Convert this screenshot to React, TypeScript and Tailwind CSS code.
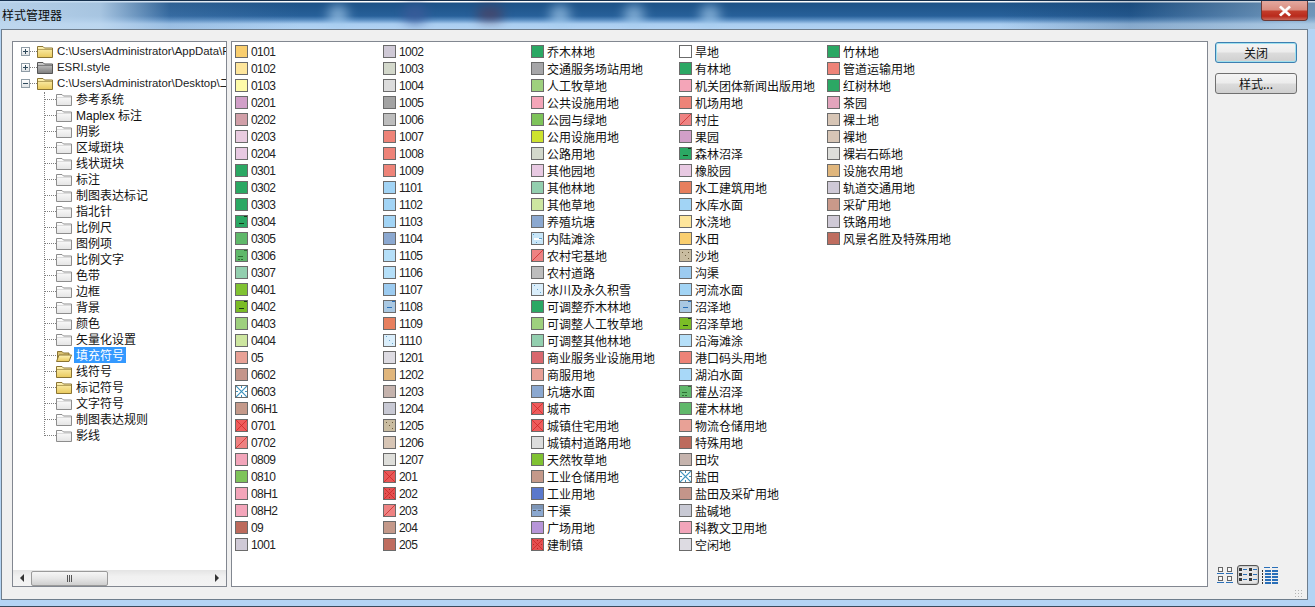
import React from "react";

type Item = [string, string, string?];

const col1: Item[] = [
  ["0101", "#f9ce6f"], ["0102", "#fee69c"], ["0103", "#fefba9"], ["0201", "#d19fc8"], ["0202", "#d19fa8"],
  ["0203", "#e9cbe0"], ["0204", "#e8c9e2"], ["0301", "#2ba864"], ["0302", "#2ba864"], ["0303", "#2ba864"],
  ["0304", "#2ba864", "dash"], ["0305", "#5fb86a"], ["0306", "#5fb86a", "dash2"], ["0307", "#93cfaf"], ["0401", "#80c232"],
  ["0402", "#7bbc26", "dash"], ["0403", "#9ed07e"], ["0404", "#cde6a0"], ["05", "#e8a196"], ["0602", "#c4958a"],
  ["0603", "#ffffff", "bluex"], ["06H1", "#c4998a"], ["0701", "#ee5c5c", "x"], ["0702", "#ee8282", "slash"], ["0809", "#f2a5ba"],
  ["0810", "#7ec35a"], ["08H1", "#f3a5ba"], ["08H2", "#f3a5ba"], ["09", "#bd6a5c"], ["1001", "#cfc9d6"],
];
const col2: Item[] = [
  ["1002", "#cfc9d6"], ["1003", "#d3d8cb"], ["1004", "#dcdcdc"], ["1005", "#a3a3a3"], ["1006", "#bdbdbd"],
  ["1007", "#ee8378"], ["1008", "#ee8378"], ["1009", "#ee8378"], ["1101", "#a2d4f5"], ["1102", "#a2d4f5"],
  ["1103", "#a2d4f5"], ["1104", "#8ba8d0"], ["1105", "#b5dff8"], ["1106", "#b5dff8"], ["1107", "#9ccbf0"],
  ["1108", "#a9c8e2", "bluedash"], ["1109", "#e77f5e"], ["1110", "#daeefb", "bluedots"], ["1201", "#dddbe2"], ["1202", "#e0b67c"],
  ["1203", "#c5b3ad"], ["1204", "#c8c9d4"], ["1205", "#c9bca0", "dots"], ["1206", "#d7c5b5"], ["1207", "#dededa"],
  ["201", "#e85757", "x"], ["202", "#e45050", "xdots"], ["203", "#ee8282", "slash"], ["204", "#c4998a"], ["205", "#bf6d5f"],
];
const col3: Item[] = [
  ["乔木林地", "#2ba864"], ["交通服务场站用地", "#a6a6a8"], ["人工牧草地", "#9ed07e"], ["公共设施用地", "#f4a5b8"], ["公园与绿地", "#7ec35a"],
  ["公用设施用地", "#cde22e"], ["公路用地", "#d3d8cb"], ["其他园地", "#e8c9e2"], ["其他林地", "#93cfaf"], ["其他草地", "#cde6a0"],
  ["养殖坑塘", "#8ba8d0"], ["内陆滩涂", "#c8e6f8", "wave"], ["农村宅基地", "#ee8282", "slash"], ["农村道路", "#bdbdbd"], ["冰川及永久积雪", "#daeefb", "bluedots"],
  ["可调整乔木林地", "#2ba864"], ["可调整人工牧草地", "#9ed07e"], ["可调整其他林地", "#93cfaf"], ["商业服务业设施用地", "#d8686e"], ["商服用地", "#e8a196"],
  ["坑塘水面", "#8ba8d0"], ["城市", "#ee5c5c", "x"], ["城镇住宅用地", "#ee5c5c", "x"], ["城镇村道路用地", "#dcdcdc"], ["天然牧草地", "#80c232"],
  ["工业仓储用地", "#c4998a"], ["工业用地", "#5a78cc"], ["干渠", "#8ba8d0", "graydash"], ["广场用地", "#b795d8"], ["建制镇", "#e45050", "xdots"],
];
const col4: Item[] = [
  ["旱地", "#ffffff"], ["有林地", "#2ba864"], ["机关团体新闻出版用地", "#f4a5b8"], ["机场用地", "#ee8378"], ["村庄", "#ee8282", "slash"],
  ["果园", "#d19fc8"], ["森林沼泽", "#2ba864", "dash"], ["橡胶园", "#e8c9e2"], ["水工建筑用地", "#e77f5e"], ["水库水面", "#a2d4f5"],
  ["水浇地", "#fee69c"], ["水田", "#f9ce6f"], ["沙地", "#c9bca0", "dots"], ["沟渠", "#9ccbf0"], ["河流水面", "#a2d4f5"],
  ["沼泽地", "#a9c8e2", "bluedash"], ["沼泽草地", "#7bbc26", "dash"], ["沿海滩涂", "#b5dff8"], ["港口码头用地", "#ee8378"], ["湖泊水面", "#a8d8f8"],
  ["灌丛沼泽", "#5fb86a", "dash2"], ["灌木林地", "#5fb86a"], ["物流仓储用地", "#e8a196"], ["特殊用地", "#bd6a5c"], ["田坎", "#c5b3ad"],
  ["盐田", "#ffffff", "bluex"], ["盐田及采矿用地", "#c4958a"], ["盐碱地", "#c8c9d4"], ["科教文卫用地", "#f2a5ba"], ["空闲地", "#dddbe2"],
];
const col5: Item[] = [
  ["竹林地", "#2ba864"], ["管道运输用地", "#ee8378"], ["红树林地", "#2ba864"], ["茶园", "#e2a4bc"], ["裸土地", "#d7c5b5"],
  ["裸地", "#d7c5b5"], ["裸岩石砾地", "#dededa"], ["设施农用地", "#e0b67c"], ["轨道交通用地", "#cfc9d6"], ["采矿用地", "#c9998a"],
  ["铁路用地", "#cfc9d6"], ["风景名胜及特殊用地", "#bf6d5f"],
];

function Pattern({ kind }: { kind?: string }) {
  if (!kind) return null;
  return (
    <svg viewBox="0 0 11 11" className="absolute inset-0 w-[11px] h-[11px]" shapeRendering="crispEdges">
      {(kind === "x" || kind === "xdots") && (
        <path d="M0 0L11 11M11 0L0 11" fill="none" stroke="#c9201f" strokeWidth="0.7" shapeRendering="auto" />
      )}
      {kind === "xdots" && (
        <g fill="#b82424">
          <rect x="1" y="5" width="1" height="1" />
          <rect x="9" y="5" width="1" height="1" />
          <rect x="5" y="1" width="1" height="1" />
          <rect x="5" y="9" width="1" height="1" />
        </g>
      )}
      {kind === "slash" && <path d="M0 11L11 0" stroke="#c9201f" strokeWidth="0.7" fill="none" shapeRendering="auto" />}
      {kind === "bluex" && (
        <g>
          <path d="M0 0L11 11M11 0L0 11" stroke="#3d93bd" strokeWidth="1.2" fill="none" shapeRendering="auto" />
          <rect x="0" y="5" width="2" height="1" fill="#3d93bd" />
          <rect x="9" y="5" width="2" height="1" fill="#3d93bd" />
          <rect x="5" y="0" width="1" height="2" fill="#3d93bd" />
          <rect x="5" y="9" width="1" height="2" fill="#3d93bd" />
        </g>
      )}
      {kind === "dash" && (
        <g fill="#173a18">
          <rect x="3" y="7" width="5" height="1" />
          <rect x="8" y="0" width="3" height="1" />
        </g>
      )}
      {kind === "dash2" && (
        <g fill="#2c6e32">
          <rect x="2" y="6" width="5" height="1" />
          <rect x="2" y="9" width="2" height="1" />
          <rect x="5" y="9" width="2" height="1" />
          <rect x="8" y="0" width="3" height="1" />
        </g>
      )}
      {kind === "bluedash" && (
        <g fill="#2a6fb8">
          <rect x="3" y="6" width="5" height="1" />
          <rect x="8" y="0" width="3" height="1" />
        </g>
      )}
      {kind === "graydash" && (
        <g fill="#555c66">
          <rect x="0" y="0" width="11" height="4" opacity="0.25" />
          <rect x="1" y="5" width="3" height="1" />
          <rect x="6" y="5" width="3" height="1" />
        </g>
      )}
      {kind === "wave" && (
        <g>
          <rect x="2" y="5" width="7" height="2" fill="#ffffff" />
          <rect x="1" y="1" width="1" height="1" fill="#5c9ec9" />
          <rect x="7" y="5" width="3" height="1" fill="#5c9ec9" />
          <rect x="4" y="9" width="1" height="1" fill="#5c9ec9" />
        </g>
      )}
      {kind === "bluedots" && (
        <g fill="#6aa8d0">
          <rect x="2" y="1" width="1" height="1" />
          <rect x="5" y="5" width="1" height="1" />
          <rect x="8" y="8" width="1" height="1" />
        </g>
      )}
      {kind === "dots" && (
        <g fill="#6b5b3c">
          <rect x="2" y="2" width="1" height="1" />
          <rect x="8" y="2" width="1" height="1" />
          <rect x="5" y="5" width="1" height="1" />
          <rect x="8" y="8" width="1" height="1" />
        </g>
      )}
    </svg>
  );
}

function Row({ item, latin }: { item: Item; latin?: boolean }) {
  return (
    <div className="h-[17px] flex items-center">
      <span
        className="relative w-[13px] h-[13px] shrink-0 border border-[#6b6b6b]"
        style={{ backgroundColor: item[1] }}
      >
        <Pattern kind={item[2]} />
      </span>
      <span
        className={
          latin
            ? "ml-[3px] mt-[1px] text-[12px] tracking-[-0.6px] leading-none text-[#222] whitespace-nowrap font-['Liberation_Sans',sans-serif]"
            : "ml-[3px] text-[12px] leading-none text-[#111] whitespace-nowrap font-['Noto_Sans_CJK_SC',sans-serif]"
        }
      >
        {item[0]}
      </span>
    </div>
  );
}

function Column({ items, latin }: { items: Item[]; latin?: boolean }) {
  return (
    <div className="w-[148px] shrink-0 flex flex-col">
      {items.map((it) => (
        <Row key={it[0]} item={it} latin={latin} />
      ))}
    </div>
  );
}

function Folder({ tone, open }: { tone: "white" | "yellow" | "gray"; open?: boolean }) {
  const pal = {
    white: { s: "#8d8d8d", a: "#ffffff", b: "#e4e4e4" },
    yellow: { s: "#8a7433", a: "#fff4b8", b: "#e9c95c" },
    gray: { s: "#555555", a: "#d2d2d2", b: "#7c7c7c" },
  }[tone];
  const id = "fg" + tone + (open ? "o" : "");
  return (
    <svg width="16" height="13" viewBox="0 0 16 13" className="shrink-0">
      <defs>
        <linearGradient id={id} x1="0" y1="0" x2="0" y2="1">
          <stop offset="0" stopColor={pal.a} />
          <stop offset="1" stopColor={pal.b} />
        </linearGradient>
      </defs>
      {open ? (
        <g>
          <path d="M1.5 11.5V2.5H6L7.5 4H13V6" fill="#d9c171" stroke={pal.s} />
          <path d="M0.5 12.5L3 6H15.5L13 12.5Z" fill={`url(#${id})`} stroke={pal.s} />
        </g>
      ) : (
        <path d="M0.5 12.5V1.5H6L7.5 3H15.5V12.5Z" fill={`url(#${id})`} stroke={pal.s} />
      )}
      {!open && <path d="M1 4.5H15" stroke={tone === "white" ? "#c9c9c9" : pal.s} strokeOpacity="0.6" fill="none" />}
    </svg>
  );
}

function Expander({ open }: { open?: boolean }) {
  return (
    <span className="relative w-[9px] h-[9px] shrink-0 border border-[#8f9ca6] bg-gradient-to-b from-white to-[#dfe3e6]">
      <span className="absolute left-[1px] top-[3px] w-[5px] h-[1px] bg-[#2f4a5c]" />
      {!open && <span className="absolute left-[3px] top-[1px] w-[1px] h-[5px] bg-[#2f4a5c]" />}
    </span>
  );
}

const children: [string, "white" | "yellow", boolean?, boolean?][] = [
  ["参考系统", "white"], ["Maplex 标注", "white"], ["阴影", "white"], ["区域斑块", "white"], ["线状斑块", "white"],
  ["标注", "white"], ["制图表达标记", "white"], ["指北针", "white"], ["比例尺", "white"], ["图例项", "white"],
  ["比例文字", "white"], ["色带", "white"], ["边框", "white"], ["背景", "white"], ["颜色", "white"],
  ["矢量化设置", "white"], ["填充符号", "yellow", true, true], ["线符号", "yellow"], ["标记符号", "yellow"], ["文字符号", "white"],
  ["制图表达规则", "white"], ["影线", "white"],
];

const fontTree = "leading-none whitespace-nowrap font-['Liberation_Sans','Noto_Sans_CJK_SC',sans-serif]";

function TopNode({ label, open, tone }: { label: string; open?: boolean; tone: "yellow" | "gray" }) {
  return (
    <div className="h-4 flex items-center pl-[8px]">
      <Expander open={open} />
      <span className="w-[7px] shrink-0 border-t border-dotted border-[#808080]" />
      <Folder tone={tone} />
      <span className={`ml-[4px] mt-[1px] text-[11.4px] text-[#222] ${fontTree}`}>{label}</span>
    </div>
  );
}

function ViewIconLarge() {
  return (
    <svg width="16" height="17" viewBox="0 0 16 17" shapeRendering="crispEdges">
      {[[0, 0], [9, 0], [0, 9], [9, 9]].map(([x, y]) => (
        <g key={`${x}-${y}`}>
          <rect x={x + 1.5} y={y + 0.5} width="4" height="4" fill="#f8f8f8" stroke="#666" />
          <rect x={x} y={y + 6} width="7" height="1" fill="#2a6fb8" />
        </g>
      ))}
    </svg>
  );
}

function ViewIconSmall() {
  return (
    <svg width="18" height="15" viewBox="0 0 18 15" shapeRendering="crispEdges">
      {[0, 5, 10].flatMap((y) =>
        [0, 10].map((x) => (
          <g key={`${x}-${y}`}>
            <rect x={x} y={y} width="3" height="3" fill="#3a3a3a" />
            <rect x={x + 4} y={y + 1} width="4" height="1" fill="#2a6fb8" />
          </g>
        ))
      )}
    </svg>
  );
}

function ViewIconList() {
  return (
    <svg width="16" height="17" viewBox="0 0 16 17" shapeRendering="crispEdges">
      <rect x="2" y="0" width="6" height="1" fill="#2a6fb8" />
      <rect x="10" y="0" width="6" height="1" fill="#2a6fb8" />
      {[3, 6, 9, 12, 15].map((y) => (
        <g key={y}>
          <rect x="0" y={y} width="1" height="2" fill="#333" />
          <rect x="3" y={y} width="6" height="2" fill="#2a6fb8" />
          <rect x="10" y={y} width="6" height="2" fill="#2a6fb8" />
        </g>
      ))}
    </svg>
  );
}

export default function App() {
  return (
    <div className="relative w-[1315px] h-[607px] overflow-hidden flex flex-col bg-[#b4d4f4] border-b border-[#3a4a5c]">
      {/* Title bar */}
      <div className="relative h-[29px] shrink-0 overflow-hidden border-t border-t-[#16304d] bg-[linear-gradient(to_bottom,#ffffff_0px,#ffffff_1px,#1d5286_2px,#27609a_15px,#5b8fc3_19px,#a9cdf0_23px,#b4d4f4_29px)]">
        <div className="absolute inset-0 bg-[linear-gradient(to_right,rgba(190,215,238,0.95)_0px,rgba(190,215,238,0.85)_100px,rgba(100,140,185,0.25)_170px,rgba(30,70,120,0)_300px)]" />
        <div className="absolute inset-0 bg-[linear-gradient(to_right,rgba(30,60,100,0)_1000px,rgba(20,55,95,0.25)_1130px,rgba(170,195,215,0.55)_1290px)]" />
        {[338, 560, 634, 710].map((x) => (
          <div key={x} className="absolute top-[4px] w-[20px] h-[22px] rounded-full bg-[#a6cdee] opacity-70 blur-[6px]" style={{ left: x - 10 }} />
        ))}
        <div className="absolute top-[4px] left-[403px] w-[24px] h-[18px] rounded-full bg-[#3d5a99] opacity-80 blur-[6px]" />
        <div className="absolute top-[6px] left-[477px] w-[26px] h-[14px] rounded-full bg-[#553a55] opacity-70 blur-[6px]" />
        <div className="absolute top-[7px] left-[2px] text-[12px] leading-[14px] text-[#0c0c0c] font-['Noto_Sans_CJK_SC',sans-serif]">
          样式管理器
        </div>
        <div className="absolute top-0 left-[1261px] w-[47px] h-[20px] rounded-b-[4px] border border-t-0 border-[#6b3a36] bg-[linear-gradient(to_bottom,#e3a99f_0%,#d98d80_45%,#c23b2a_55%,#b92a1c_80%,#c8675a_100%)] flex items-center justify-center">
          <svg width="14" height="12" viewBox="0 0 14 12">
            <path d="M2 1.5L12 10.5M12 1.5L2 10.5" stroke="#f6eeee" strokeWidth="3" fill="none" />
            <path d="M2 1.5L12 10.5M12 1.5L2 10.5" stroke="#ffffff" strokeWidth="1.6" fill="none" />
          </svg>
        </div>
      </div>

      {/* Client area */}
      <div className="relative h-[571px] shrink-0 ml-[1px] mr-[7px] border border-[#6e7d8c] bg-[#f0f0f0] flex pl-[10px] pt-[11px] pb-[11px]">
        {/* Tree panel */}
        <div className="relative w-[215px] h-[546px] shrink-0 border border-[#828790] bg-white flex flex-col overflow-hidden">
          <div className="relative flex-1 pt-[1px] overflow-hidden">
            <TopNode label="C:\Users\Administrator\AppData\R" tone="yellow" />
            <TopNode label="ESRI.style" tone="gray" />
            <TopNode label="C:\Users\Administrator\Desktop\二" tone="yellow" open />
            <div className="absolute left-[31px] top-[50px] h-[344px] border-l border-dotted border-[#808080]" />
            {children.map(([label, tone, open, sel]) => (
              <div key={label} className="h-4 flex items-center pl-[31px]">
                <span className="w-[12px] shrink-0 border-t border-dotted border-[#808080]" />
                <Folder tone={tone} open={open} />
                {sel ? (
                  <span className={`ml-[2px] px-[2px] pt-[1px] h-4 flex items-center bg-[#3399ff] text-[12px] text-white ${fontTree}`}>
                    {label}
                  </span>
                ) : (
                  <span className={`ml-[4px] mt-[1px] text-[12px] text-[#111] ${fontTree}`}>{label}</span>
                )}
              </div>
            ))}
          </div>
          {/* Scrollbar */}
          <div className="h-4 shrink-0 flex items-center bg-[linear-gradient(to_bottom,#e4e4e4,#f1f1f1_40%,#f3f3f3)]">
            <span className="w-[18px] flex justify-center">
              <span className="w-0 h-0 border-y-[4px] border-y-transparent border-r-[4px] border-r-[#333]" />
            </span>
            <span className="w-[77px] h-[15px] rounded-[2px] border border-[#9a9a9a] bg-[linear-gradient(to_bottom,#f6f6f6,#e6e6e6_50%,#cfcfcf)] flex items-center justify-center gap-[1px]">
              <span className="w-[1px] h-[7px] bg-[#555]" />
              <span className="w-[1px] h-[7px] bg-[#555]" />
              <span className="w-[1px] h-[7px] bg-[#555]" />
            </span>
            <span className="flex-1" />
            <span className="w-[18px] flex justify-center">
              <span className="w-0 h-0 border-y-[4px] border-y-transparent border-l-[4px] border-l-[#333]" />
            </span>
          </div>
        </div>

        {/* List panel */}
        <div className="ml-[4px] w-[977px] h-[546px] shrink-0 border border-[#828790] bg-white flex pl-[3px] pt-[1px] overflow-hidden">
          <Column items={col1} latin />
          <Column items={col2} latin />
          <Column items={col3} />
          <Column items={col4} />
          <Column items={col5} />
        </div>

        {/* Right column */}
        <div className="ml-[7px] w-[82px] shrink-0 flex flex-col">
          <button className="mt-[1px] h-[21px] w-[82px] rounded-[3px] border border-[#3c7fb1] shadow-[inset_0_0_0_1px_#9fe0ee] bg-[linear-gradient(to_bottom,#f4f4f4,#ececec_48%,#dcdcdc_52%,#cfcfcf)] text-[12px] leading-none text-[#111] font-['Noto_Sans_CJK_SC',sans-serif]">
            关闭
          </button>
          <button className="mt-[10px] h-[21px] w-[82px] rounded-[3px] border border-[#707070] bg-[linear-gradient(to_bottom,#f4f4f4,#ececec_48%,#dcdcdc_52%,#cfcfcf)] text-[12px] leading-none text-[#111] font-['Noto_Sans_CJK_SC',sans-serif]">
            样式...
          </button>
          <div className="mt-auto mb-[3px] flex items-center pl-[2px]">
            <ViewIconLarge />
            <div className="ml-[4px] w-[22px] h-[20px] flex items-center justify-center rounded-[3px] border border-[#555] bg-[#e6e6e6] shadow-[inset_0_0_2px_#888]">
              <ViewIconSmall />
            </div>
            <div className="ml-[3px]">
              <ViewIconList />
            </div>
          </div>
        </div>

        {/* Resize grip */}
        <div className="absolute right-[5px] bottom-[1px] w-[8px] h-[9px] opacity-60 bg-[radial-gradient(circle,#8a8a8a_0.7px,transparent_0.8px)] bg-[length:3px_3px]" />
      </div>
    </div>
  );
}
